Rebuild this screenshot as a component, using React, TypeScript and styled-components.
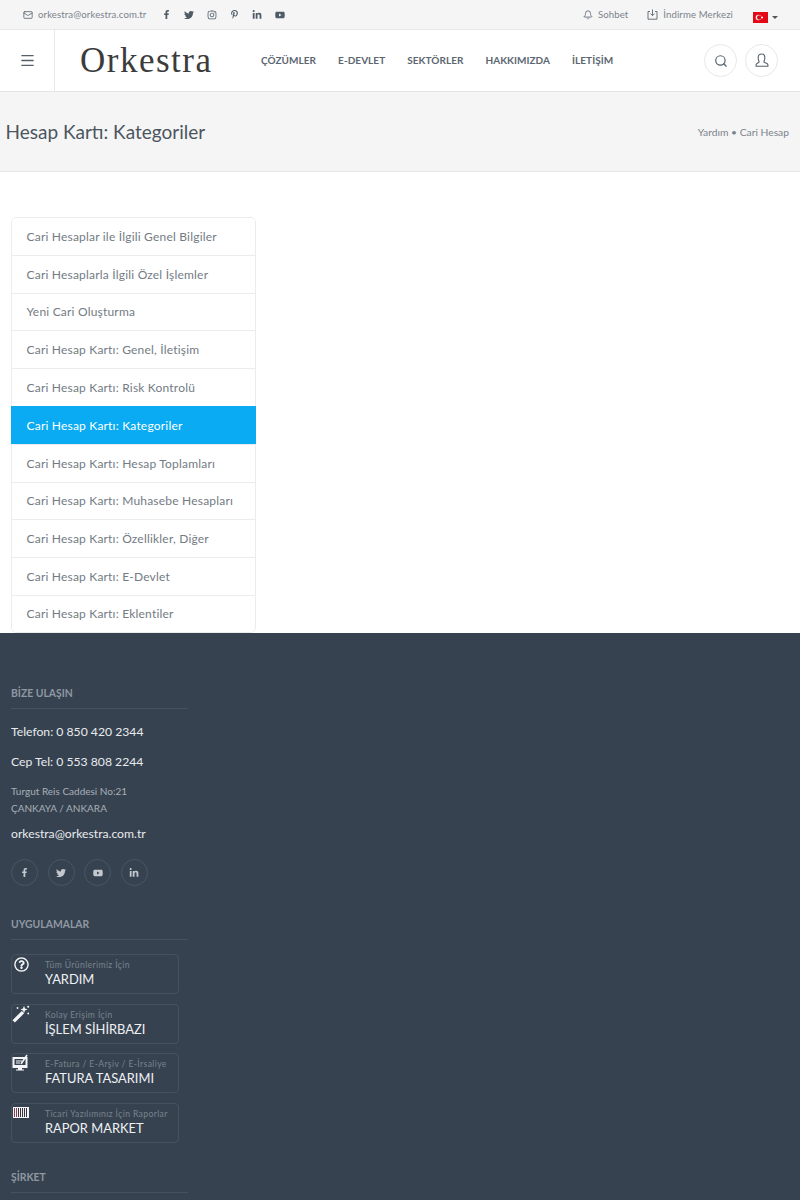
import React from 'react';
import styled, { createGlobalStyle } from 'styled-components';
import { Mail, Bell, Menu, Search } from 'lucide-react';
import { FaFacebookF, FaTwitter, FaInstagram, FaPinterestP, FaLinkedinIn, FaYoutube, FaRegQuestionCircle } from 'react-icons/fa';

const GlobalStyle = createGlobalStyle`
  html, body {
    margin: 0;
    padding: 0;
    height: 1200px;
    overflow: hidden;
    background: #fff;
    font-family: 'Lato', 'Noto Sans', sans-serif;
  }
  * { box-sizing: border-box; }
`;

const Page = styled.div`
  width: 800px;
  height: 1200px;
  overflow: hidden;
  display: flex;
  flex-direction: column;
`;

const TopBar = styled.div`
  height: 29px;
  flex: none;
  background: #f5f5f5;
  display: flex;
  align-items: center;
  justify-content: space-between;
  padding: 0 22px 0 23px;
  font-size: 9.6px;
  color: #7b838c;
`;

const TopGroup = styled.div`
  display: flex;
  align-items: center;
`;

const TopLink = styled.span<{ $gap?: number }>`
  display: flex;
  align-items: center;
  gap: 5px;
  margin-right: ${p => p.$gap ?? 0}px;
  color: #7b838c;
  letter-spacing: 0.1px;
  svg { color: #5a6570; }
`;

const TopSocials = styled.div`
  display: flex;
  align-items: center;
  gap: 13px;
  margin-left: 16px;
  color: #4f5b67;
`;

const Flag = styled.svg`
  margin-top: 6px;
`;

const Caret = styled.span`
  width: 0;
  height: 0;
  border: 3px solid transparent;
  border-top-color: #555;
  border-bottom: none;
  margin: 6px 0 0 4px;
`;

const Header = styled.header`
  height: 63px;
  flex: none;
  background: #fff;
  border-top: 1px solid #e9e9e9;
  border-bottom: 1px solid #e4e4e4;
  display: flex;
  align-items: stretch;
`;

const Burger = styled.div`
  width: 55px;
  border-right: 1px solid #e9e9e9;
  display: flex;
  align-items: center;
  justify-content: center;
  color: #56616c;
`;

const Logo = styled.div`
  width: 206px;
  padding-left: 25px;
  display: flex;
  align-items: center;
  font-family: 'Liberation Serif', serif;
  font-size: 35px;
  letter-spacing: 1.5px;
  color: #3c3c3c;
`;

const Nav = styled.nav`
  flex: 1;
  display: flex;
  align-items: center;
  gap: 22px;
  font-size: 10px;
  font-weight: 700;
  letter-spacing: 0.05px;
  color: #5b6671;
  padding-bottom: 1px;
`;

const HeaderActions = styled.div`
  display: flex;
  align-items: center;
  gap: 8px;
  padding-right: 22px;
`;

const RoundButton = styled.div`
  width: 33px;
  height: 33px;
  border-radius: 50%;
  border: 1px solid #e8e8e8;
  display: flex;
  align-items: center;
  justify-content: center;
  color: #56616c;
`;

const TitleBand = styled.div`
  height: 80px;
  flex: none;
  background: #f5f5f5;
  border-bottom: 1px solid #e6e6e6;
  display: flex;
  align-items: center;
  justify-content: space-between;
  padding-right: 11px;
  overflow: hidden;
`;

const PageTitle = styled.h1`
  margin: 0 0 0 -33px;
  font-size: 19px;
  font-weight: 400;
  color: #4b5560;
  white-space: nowrap;
`;

const Crumbs = styled.div`
  font-size: 10.3px;
  color: #7b838c;
`;

const Main = styled.main`
  height: 461px;
  flex: none;
  padding: 45px 0 0 11px;
`;

const SideList = styled.ul`
  list-style: none;
  margin: 0;
  padding: 0;
  width: 245px;
  border-radius: 5px;
  overflow: hidden;
`;

const SideItem = styled.li<{ $active?: boolean }>`
  height: 37.8px;
  display: flex;
  align-items: center;
  padding-left: 14.5px;
  font-size: 12px;
  letter-spacing: 0.2px;
  color: ${p => (p.$active ? '#fff' : '#737b84')};
  background: ${p => (p.$active ? '#0aabf2' : '#fff')};
  border: 1px solid ${p => (p.$active ? '#0aabf2' : '#ececec')};
  border-bottom: none;
  &:first-child { border-radius: 5px 5px 0 0; }
  &:last-child { border-bottom: 1px solid #ececec; border-radius: 0 0 5px 5px; }
`;

const Footer = styled.footer`
  flex: 1;
  background: #364250;
  padding: 53px 0 0 11px;
  color: #fff;
`;

const FooterCol = styled.div`
  width: 177px;
`;

const FooterHeading = styled.h5<{ $top?: number }>`
  margin: ${p => p.$top ?? 0}px 0 0;
  padding-bottom: 8px;
  border-bottom: 1px solid #465260;
  font-size: 10.4px;
  line-height: 14px;
  font-weight: 700;
  color: #8f98a2;
`;

const Phone = styled.div<{ $top: number }>`
  margin-top: ${p => p.$top}px;
  font-size: 12.2px;
  line-height: 16px;
  color: #e8ebee;
  white-space: nowrap;
`;

const Address = styled.div`
  margin-top: 13px;
  font-size: 10px;
  line-height: 17px;
  color: #a8afb7;
  white-space: nowrap;
`;

const FooterSocials = styled.div`
  margin-top: 17px;
  display: flex;
  gap: 9.5px;
`;

const SocialCircle = styled.div`
  width: 27px;
  height: 27px;
  border-radius: 50%;
  border: 1px solid #4a5663;
  display: flex;
  align-items: center;
  justify-content: center;
  color: #c3c8ce;
`;

const AppList = styled.div`
  margin-top: 14px;
  display: flex;
  flex-direction: column;
  gap: 9.6px;
`;

const AppCard = styled.div`
  position: relative;
  width: 168px;
  height: 40px;
  border: 1px solid #465260;
  border-radius: 4px;
  padding: 5px 0 0 33px;
`;

const AppIcon = styled.div`
  position: absolute;
  left: 0;
  top: 0;
  width: 18px;
  height: 18px;
  display: flex;
  align-items: center;
  justify-content: center;
  color: #f4f5f6;
`;

const AppHint = styled.div`
  font-size: 8.6px;
  line-height: 11px;
  letter-spacing: 0.38px;
  color: #78828d;
  white-space: nowrap;
`;

const AppName = styled.div`
  font-size: 12.9px;
  line-height: 16px;
  color: #eef0f2;
  white-space: nowrap;
`;

const sideItems = [
  'Cari Hesaplar ile İlgili Genel Bilgiler',
  'Cari Hesaplarla İlgili Özel İşlemler',
  'Yeni Cari Oluşturma',
  'Cari Hesap Kartı: Genel, İletişim',
  'Cari Hesap Kartı: Risk Kontrolü',
  'Cari Hesap Kartı: Kategoriler',
  'Cari Hesap Kartı: Hesap Toplamları',
  'Cari Hesap Kartı: Muhasebe Hesapları',
  'Cari Hesap Kartı: Özellikler, Diğer',
  'Cari Hesap Kartı: E-Devlet',
  'Cari Hesap Kartı: Eklentiler',
];

const navItems = ['ÇÖZÜMLER', 'E-DEVLET', 'SEKTÖRLER', 'HAKKIMIZDA', 'İLETİŞİM'];

const DownloadBox = () => (
  <svg width="11" height="11" viewBox="0 0 11 11" fill="none" stroke="currentColor" strokeWidth="0.9">
    <path d="M3 2.500H1v7.700h9V2.500H8" />
    <path d="M5.500 0.500v6M3.500 4.600l2 2 2-2" />
  </svg>
);

const UserStamp = () => (
  <svg width="15" height="15" viewBox="0 0 15 15" fill="none" stroke="currentColor" strokeWidth="1.1">
    <path d="M5 9.200V8.200C4.400 7.500 4.200 6.600 4.200 5V4.200C4.200 2.200 5.600 1 7.500 1s3.300 1.200 3.300 3.200V5c0 1.600-.2 2.500-.8 3.200v1l3 1.200c.6.3.9.7.9 1.400v1.400H2.100v-1.400c0-.7.3-1.100.9-1.400z" />
  </svg>
);

const WandIcon = () => (
  <svg width="18" height="18" viewBox="0 0 18 18" fill="currentColor">
    <path d="M0.500 15.200L9.800 5.900l2.400 2.400L2.900 17.600z" />
    <path d="M12 0.800l1 2.700 2.700 1-2.700 1-1 2.700-1-2.700-2.700-1 2.700-1z" />
    <circle cx="16.200" cy="1.800" r="1" />
    <circle cx="5.500" cy="3" r=".9" />
    <circle cx="16.200" cy="8.500" r=".9" />
  </svg>
);

const MonitorIcon = () => (
  <svg width="18" height="18" viewBox="0 0 18 18" fill="none">
    <path d="M0.500 3h15v11H0.500z" fill="#f4f5f6" />
    <path d="M2.500 5h11v6h-11z" fill="#364250" />
    <path d="M4 7h6M4 9h4" stroke="#f4f5f6" strokeWidth="1" />
    <path d="M9 10l6-9" stroke="#f4f5f6" strokeWidth="1.500" />
    <path d="M6 14h4v1.500h2v1H4v-1h2z" fill="#f4f5f6" />
  </svg>
);

const BarcodeIcon = () => (
  <svg width="16" height="11" viewBox="0 0 16 11" shapeRendering="crispEdges">
    <rect width="16" height="11" fill="#f4f5f6" />
    {[2, 4, 6, 8, 10, 12, 14].map((x, i) => (
      <rect key={x} x={x - 1} y="1" width="1" height="9" fill={i < 2 ? '#8a3f57' : '#3a3340'} />
    ))}
  </svg>
);

const apps = [
  { hint: 'Tüm Ürünlerimiz İçin', name: 'YARDIM', icon: <FaRegQuestionCircle size={15} /> },
  { hint: 'Kolay Erişim İçin', name: 'İŞLEM SİHİRBAZI', icon: <WandIcon /> },
  { hint: 'E-Fatura / E-Arşiv / E-İrsaliye', name: 'FATURA TASARIMI', icon: <MonitorIcon /> },
  { hint: 'Ticari Yazılımınız İçin Raporlar', name: 'RAPOR MARKET', icon: <BarcodeIcon /> },
];

const App: React.FC = () => (
  <Page>
    <GlobalStyle />
    <TopBar>
      <TopGroup>
        <TopLink><Mail size={10} />orkestra@orkestra.com.tr</TopLink>
        <TopSocials>
          <FaFacebookF size={9} />
          <FaTwitter size={10} />
          <FaInstagram size={10} />
          <FaPinterestP size={9} />
          <FaLinkedinIn size={10} />
          <FaYoutube size={10} />
        </TopSocials>
      </TopGroup>
      <TopGroup>
        <TopLink $gap={19}><Bell size={10} />Sohbet</TopLink>
        <TopLink $gap={20}><DownloadBox />İndirme Merkezi</TopLink>
        <Flag width="15" height="11" viewBox="0 0 15 11">
          <rect width="15" height="11" fill="#e30a17" />
          <circle cx="5.500" cy="5.500" r="2.800" fill="#fff" />
          <circle cx="6.200" cy="5.500" r="2.200" fill="#e30a17" />
          <circle cx="9" cy="5.500" r="1" fill="#fff" />
        </Flag>
        <Caret />
      </TopGroup>
    </TopBar>
    <Header>
      <Burger><Menu size={17} strokeWidth={1.8} /></Burger>
      <Logo>Orkestra</Logo>
      <Nav>
        {navItems.map(item => <span key={item}>{item}</span>)}
      </Nav>
      <HeaderActions>
        <RoundButton><Search size={14} /></RoundButton>
        <RoundButton><UserStamp /></RoundButton>
      </HeaderActions>
    </Header>
    <TitleBand>
      <PageTitle>Cari Hesap Kartı: Kategoriler</PageTitle>
      <Crumbs>Yardım • Cari Hesap</Crumbs>
    </TitleBand>
    <Main>
      <SideList>
        {sideItems.map(item => (
          <SideItem key={item} $active={item.endsWith('Kategoriler')}>{item}</SideItem>
        ))}
      </SideList>
    </Main>
    <Footer>
      <FooterCol>
        <FooterHeading>BİZE ULAŞIN</FooterHeading>
        <Phone $top={15}>Telefon: 0 850 420 2344</Phone>
        <Phone $top={14}>Cep Tel: 0 553 808 2244</Phone>
        <Address>Turgut Reis Caddesi No:21<br />ÇANKAYA / ANKARA</Address>
        <Phone $top={9}>orkestra@orkestra.com.tr</Phone>
        <FooterSocials>
          <SocialCircle><FaFacebookF size={9} /></SocialCircle>
          <SocialCircle><FaTwitter size={10} /></SocialCircle>
          <SocialCircle><FaYoutube size={10} /></SocialCircle>
          <SocialCircle><FaLinkedinIn size={10} /></SocialCircle>
        </FooterSocials>
        <FooterHeading $top={31}>UYGULAMALAR</FooterHeading>
        <AppList>
          {apps.map(app => (
            <AppCard key={app.name}>
              <AppIcon>{app.icon}</AppIcon>
              <AppHint>{app.hint}</AppHint>
              <AppName>{app.name}</AppName>
            </AppCard>
          ))}
        </AppList>
        <FooterHeading $top={27}>ŞİRKET</FooterHeading>
      </FooterCol>
    </Footer>
  </Page>
);

export default App;
